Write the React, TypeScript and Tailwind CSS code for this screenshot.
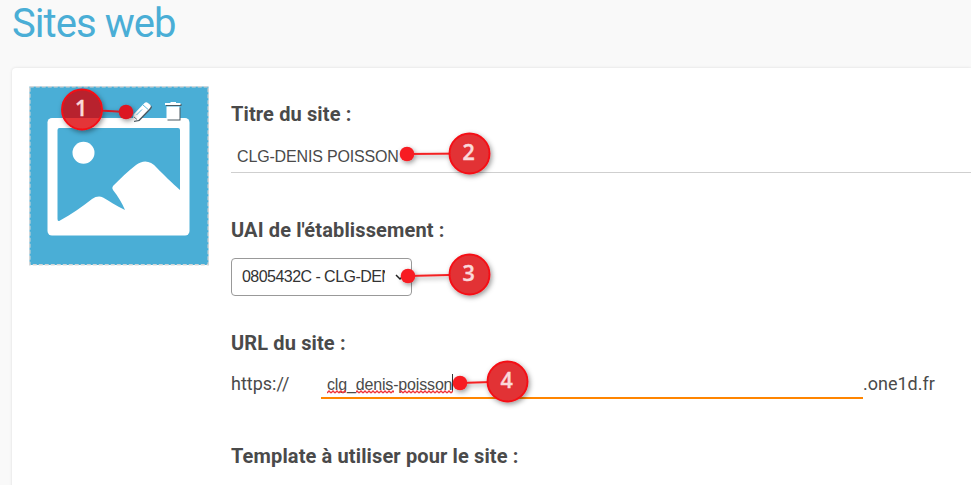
import React from "react";

type Marker = { n: number; cx: number; cy: number; dx: number; dy: number };

const markers: Marker[] = [
  { n: 1, cx: 82, cy: 109.5, dx: 126, dy: 112 },
  { n: 2, cx: 469.5, cy: 153.5, dx: 407, dy: 154 },
  { n: 3, cx: 469.5, cy: 274.5, dx: 408, dy: 276 },
  { n: 4, cx: 507.5, cy: 381.5, dx: 460, dy: 383 },
];

function Label({ children }: { children: React.ReactNode }) {
  return <h2 className="h-6 text-[20px] leading-6 font-bold tracking-[0.13px] whitespace-nowrap text-[#4a4a4a]">{children}</h2>;
}

function Thumbnail() {
  return (
    <div className="h-[180px] w-[180px] shrink-0">
      <svg width="180" height="180" viewBox="29 86 180 180" className="block">
        <rect x="29.5" y="86.5" width="179" height="178.5" fill="#4aaed6" />
        <rect x="29.75" y="86.75" width="178.5" height="178" fill="none" stroke="#d3d5d6" strokeWidth="1.5" strokeDasharray="4 2" />
        <rect x="47.5" y="118" width="142" height="117.5" rx="4.5" fill="#fff" />
        <path
          d="M59.5 128H178Q180 128 180 130V190C172 183 163 174 157 168C150 160 143 160 136 165C128 171 121 178 113 186Q111.500 188 113 190C118 196 122 203 125 210C116 206 109 201 103 197.500Q98 195 92 199C82 207 72 214 60 220.500Q57.500 222 57.500 219V130Q57.500 128 59.500 128Z"
          fill="#4aaed6"
        />
        <circle cx="83.500" cy="152.700" r="11" fill="#fff" />
        <g transform="translate(1 1)" fill="#4b5961">
          <path d="M133 121L133.500 114.500L144.500 103Q146 101.500 148 103L150.500 105Q151.500 106.500 150 108L138.500 120Z" />
          <path d="M166.500 106.500H179.500V119.500H166.500ZM165 103H170.500V102H176V103H180.500V105H165Z" />
        </g>
        <path d="M133 121L133.500 114.500L144.500 103Q146 101.500 148 103L150.500 105Q151.500 106.500 150 108L138.500 120Z" fill="#fff" />
        <path d="M142.800 104.800L148.200 109.500M136.500 115L142 109.500" stroke="#4aaed6" strokeWidth="0.9" fill="none" />
        <path d="M134 117L137 119.500" stroke="#4b5961" strokeWidth="0.8" />
        <path d="M166.500 106.500H179.500V119.500H166.500ZM165 103H170.500V102H176V103H180.500V105H165Z" fill="#fff" />
      </svg>
    </div>
  );
}

function Markers() {
  return (
    <svg className="pointer-events-none absolute top-0 left-0" width="971" height="485" aria-hidden="true">
      <defs>
        <linearGradient id="shade" x1="0" y1="0" x2="0" y2="1">
          <stop offset="0.71" stopColor="#b8242d" />
          <stop offset="0.71" stopColor="#e43437" />
        </linearGradient>
        <filter id="shadow" filterUnits="userSpaceOnUse" x="0" y="0" width="971" height="485">
          <feDropShadow dx="1.5" dy="2" stdDeviation="2.6" floodColor="#000" floodOpacity="0.4" />
        </filter>
      </defs>
      {markers.map((m) => (
        <g key={m.n}>
          <g filter="url(#shadow)">
            <path d={`M${m.cx} ${m.cy}L${m.dx} ${m.dy}`} stroke={m.n === 1 ? "#d31c25" : "#f32024"} strokeWidth="2" />
            <circle cx={m.dx} cy={m.dy} r="7.3" fill={m.n === 1 ? "#dc1720" : "#f71d22"} />
            <circle cx={m.cx} cy={m.cy} r="20" fill={m.n === 1 ? "url(#shade)" : "#e23236"} stroke="#f50f14" strokeWidth="1.9" />
          </g>
          <text x={m.cx - 0.9} y={m.cy + 6.5} textAnchor="middle" className="fill-[#fbd9da] stroke-[#fbd9da] stroke-[0.4px] font-['Open_Sans',sans-serif] text-[21.5px] font-semibold">
            {m.n}
          </text>
        </g>
      ))}
    </svg>
  );
}

export default function App() {
  return (
    <main className="relative h-[485px] w-[971px] overflow-hidden bg-[#f9f9f9] pl-3 font-[Roboto,sans-serif] text-[#4a4a4a]">
      <header className="h-[68px] pt-px">
        <h1 className="text-[40px] leading-[46px] font-normal tracking-[-0.95px] whitespace-nowrap text-[#4aaed6]">Sites web</h1>
      </header>
      <section className="flex h-[450px] gap-[22px] rounded-tl bg-white pt-[18px] pl-[17px] shadow-[0_0_3px_rgba(0,0,0,0.12)]">
        <Thumbnail />
        <form className="flex min-w-0 flex-1 flex-col pt-4">
          <Label>Titre du site :</Label>
          <div className="mt-[14px] flex h-[33px] items-center border-b border-[#cfcfcf] pt-px pl-1.5 font-['Liberation_Sans',Arial,sans-serif] text-[16px] tracking-[-0.16px] whitespace-nowrap">
            CLG-DENIS POISSON
          </div>
          <div className="mt-[45px]"><Label>UAI de l'établissement :</Label></div>
          <div className="mt-4 flex h-[38px] w-[181px] items-center rounded-sm border border-[#999] pl-[10px] font-['Liberation_Sans',Arial,sans-serif] text-[16px] tracking-[-0.54px] text-[#333]">
            <span className="w-[143px] overflow-hidden whitespace-nowrap">0805432C - CLG-DENIS</span>
            <svg className="ml-[10px] shrink-0" width="10" height="8" viewBox="0 0 10 8" fill="none" stroke="#222" strokeWidth="1.5"><path d="M1 2L5 6L9 2" /></svg>
          </div>
          <div className="mt-[35px]"><Label>URL du site :</Label></div>
          <div className="mt-3 flex h-8 text-[18px] leading-[34px] whitespace-nowrap">
            <span className="w-[90px]">https://</span>
            <div className="h-8 w-[542px] border-b-2 border-[#ff8500] pl-1.5 font-['Liberation_Sans',Arial,sans-serif] text-[16px] leading-[35px] tracking-[-0.16px]">
              <div className="flex h-[30px]">
                <span className="relative">
                  clg_denis-poisson
                  <svg className="absolute top-[23px] left-0" width="126" height="4" fill="none" stroke="#f0333a">
                    <defs>
                      <pattern id="wave" width="4" height="4" patternUnits="userSpaceOnUse"><path d="M0 3L2 1L4 3" strokeWidth="1.3" /></pattern>
                    </defs>
                    <path d="M0 2h19M29 2h38M73 2h53" stroke="url(#wave)" strokeWidth="4" />
                  </svg>
                </span>
                <span className="mt-[7px] h-[18px] w-px bg-[#333]" />
              </div>
            </div>
            <span>.one1d.fr</span>
          </div>
          <div className="mt-[45px]"><Label>Template à utiliser pour le site :</Label></div>
        </form>
      </section>
      <Markers />
    </main>
  );
}
